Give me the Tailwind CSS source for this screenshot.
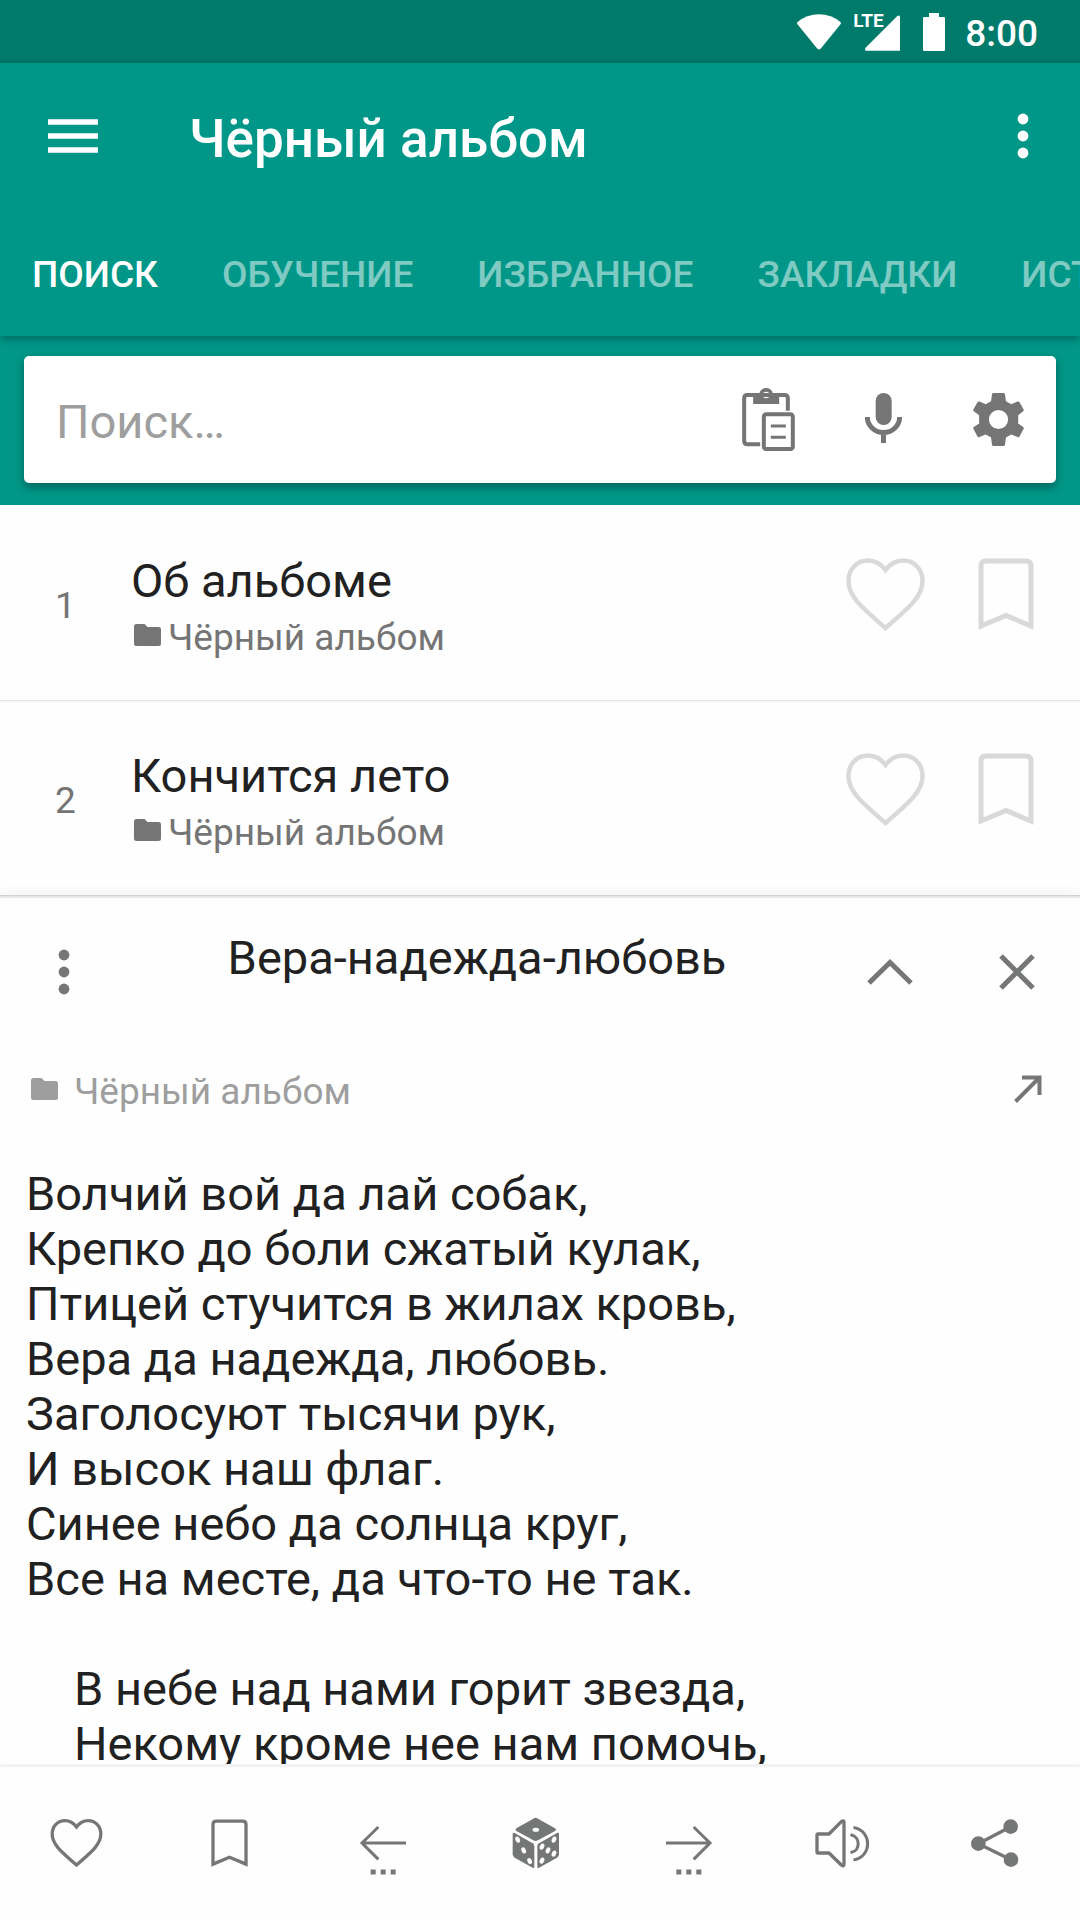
<!DOCTYPE html>
<html lang="ru">
<head>
    <meta charset="utf-8" />
    <meta name="viewport" content="width=device-width, initial-scale=1.0" />
    <title>Чёрный альбом</title>
    <script src="https://cdn.jsdelivr.net/npm/@tailwindcss/browser@4"></script>
</head>
<body class="h-screen flex flex-col overflow-hidden bg-[#fefefe] text-[#212121] font-['Roboto',sans-serif]">
    <svg class="hidden">
        <symbol id="heart" viewBox="0 0 79 73">
            <path fill="none" stroke="currentColor" d="M39.5 12C35 6 29 2.5 22 2.5C11 2.5 2.5 11 2.5 23C2.5 38 14 48 39.5 70C65 48 76.5 38 76.5 23C76.5 11 68 2.5 57 2.5C50 2.5 44 6 39.5 12Z" />
        </symbol>
        <symbol id="bookmark" viewBox="0 0 56 72">
            <path fill="none" stroke="currentColor" d="M3 68V8Q3 3 8 3H48Q53 3 53 8V68L28 57.5Z" />
        </symbol>
        <symbol id="folder" viewBox="0 0 27 22">
            <path fill="currentColor" d="M2.500 0H10.500L13.500 3H24.500Q27 3 27 5.500V19.500Q27 22 24.500 22H2.500Q0 22 0 19.500V2.500Q0 0 2.500 0Z" />
        </symbol>
        <symbol id="dots" viewBox="0 0 12 46">
            <g fill="currentColor"><circle cx="6" cy="6" r="5.400" /><circle cx="6" cy="23" r="5.400" /><circle cx="6" cy="40" r="5.400" /></g>
        </symbol>
    </svg>

    <div class="h-[63px] shrink-0 flex items-center justify-end pr-[42px] bg-[#007a6b] text-white">
        <svg class="w-11 h-9" viewBox="0 0 134 108" fill="currentColor"><path d="M1 24Q30 0 67 0Q104 0 133 24Q135 27 132 31L72 105Q67 110 62 105L2 31Q-1 27 1 24Z" /></svg>
        <div class="relative ml-6 w-[35px] h-9 translate-y-px">
            <svg class="w-full h-full" viewBox="0 0 105 106" fill="currentColor"><path d="M105 5V106H3Q-1 104 1 98L97 2Q103-2 105 5Z" /></svg>
            <span class="absolute -left-3 -top-[4px] text-[19px] leading-5 font-bold">LTE</span>
        </div>
        <svg class="ml-[23px] w-[22px] h-[38px]" viewBox="0 0 66 114" fill="currentColor"><path d="M18 0H48V12H62Q66 12 66 16V110Q66 114 62 114H4Q0 114 0 110V16Q0 12 4 12H18Z" /></svg>
        <span class="ml-[20px] pt-1 text-[37px] leading-[44px] font-medium">8:00</span>
    </div>

    <header class="relative z-10 shrink-0 bg-[#009788] text-white shadow-[0_3px_8px_rgba(0,0,0,0.3)]">
        <div class="h-[145px] flex items-center pl-12 pr-[51px]">
            <button type="button" aria-label="Меню">
                <svg class="w-[50px] h-[34px]" viewBox="0 0 50 34" stroke="currentColor" stroke-width="5.500"><path d="M0 3H50M0 17H50M0 31H50" /></svg>
            </button>
            <h1 class="flex-1 pt-1.5 pl-[91px] text-[53px] leading-[64px] font-medium">Чёрный альбом</h1>
            <button type="button" aria-label="Ещё">
                <svg class="w-3 h-[46px]"><use href="#dots" /></svg>
            </button>
        </div>
        <nav class="h-[128px] flex items-center gap-16 pt-1.5 pl-8 overflow-hidden whitespace-nowrap text-[37px] leading-[44px] font-medium text-white/50">
            <a href="#" class="text-white">ПОИСК</a>
            <a href="#">ОБУЧЕНИЕ</a>
            <a href="#">ИЗБРАННОЕ</a>
            <a href="#">ЗАКЛАДКИ</a>
            <a href="#">ИСТОРИЯ</a>
        </nav>
    </header>

    <div class="shrink-0 bg-[#009788] px-6 pt-5 pb-[22px]">
        <form class="h-[127px] flex items-center pl-8 pr-8 rounded-[5px] bg-white text-[#757575] shadow-[0_4px_10px_rgba(0,0,0,0.35)]">
            <input type="text" aria-label="Поиск" placeholder="Поиск…" class="flex-1 min-w-0 pt-1 text-[47px] leading-[56px] text-[#212121] placeholder:text-[#9e9e9e] outline-none" />
            <button type="button" aria-label="Вставить">
                <svg class="w-[53px] h-[63px]" viewBox="0 0 158 189" fill="none" stroke="currentColor">
                    <path stroke-width="12" d="M54 169H16Q6 169 6 159V31Q6 21 16 21H127Q137 21 137 31V68" />
                    <path fill="currentColor" fill-rule="evenodd" stroke="none" d="M33 15H52C55 5 63 0 72 0C81 0 89 5 92 15H111V48H33ZM72 11A10 10 0 1 0 72 31A10 10 0 1 0 72 11Z" />
                    <rect x="65" y="79" width="87" height="104" rx="7" stroke-width="12" />
                    <path stroke-width="9" d="M86 114H131M86 148H131" />
                </svg>
            </button>
            <button type="button" aria-label="Голосовой ввод" class="ml-[70px] pb-1">
                <svg class="w-[37px] h-[50px]" viewBox="0 0 111 150" fill="currentColor">
                    <rect x="32" width="48" height="96" rx="24" />
                    <path fill="none" stroke="currentColor" stroke-width="15" d="M7 72A48 46 0 0 0 104 72M55.500 118V150" />
                </svg>
            </button>
            <button type="button" aria-label="Настройки" class="ml-[71px]">
                <svg class="w-[51px] h-[53px]" viewBox="0 0 153 160" fill="currentColor"><path fill-rule="evenodd" d="M61 0H92Q95 0 96 3L99 25L115 34L134 26Q138 24 140 28L152 49Q154 53 151 55L136 67V92L151 103Q154 105 152 109L140 131Q138 135 134 133L115 125L99 134L96 157Q95 160 92 160H61Q58 160 57 157L54 134L38 125L19 133Q15 135 13 131L1 109Q-1 105 2 103L18 92V67L2 55Q-1 53 1 49L13 28Q15 24 19 26L38 34L54 25L57 3Q58 0 61 0ZM76.500 51A29 29 0 1 0 76.500 109A29 29 0 1 0 76.500 51Z" /></svg>
            </button>
        </form>
    </div>

    <ul class="shrink-0">
        <li class="h-[195px] flex items-start pr-[46px]">
            <span class="w-[131px] pt-[79px] text-center text-[37px] leading-[44px] text-[#757575]">1</span>
            <div class="flex-1 pt-12">
                <h2 class="text-[47px] leading-[56px]">Об альбоме</h2>
                <p class="mt-[7px] flex items-center gap-[7px] pl-[3px] text-[37px] leading-[44px] text-[#757575]">
                    <svg class="w-[27px] h-[22px] mb-1.5"><use href="#folder" /></svg>Чёрный альбом
                </p>
            </div>
            <button type="button" aria-label="В избранное" class="mt-[53px] text-[#d8dad9]"><svg class="w-[79px] h-[73px]" stroke-width="4.500"><use href="#heart" /></svg></button>
            <button type="button" aria-label="Закладка" class="mt-[53px] ml-[53px] text-[#d8dad9]"><svg class="w-14 h-[72px]" stroke-width="5"><use href="#bookmark" /></svg></button>
        </li>
        <li class="h-[195px] flex items-start pr-[46px] shadow-[inset_0_1px_0_#e4e4e4,inset_0_3px_0_#f7f7f7]">
            <span class="w-[131px] pt-[79px] text-center text-[37px] leading-[44px] text-[#757575]">2</span>
            <div class="flex-1 pt-12">
                <h2 class="text-[47px] leading-[56px]">Кончится лето</h2>
                <p class="mt-[7px] flex items-center gap-[7px] pl-[3px] text-[37px] leading-[44px] text-[#757575]">
                    <svg class="w-[27px] h-[22px] mb-1.5"><use href="#folder" /></svg>Чёрный альбом
                </p>
            </div>
            <button type="button" aria-label="В избранное" class="mt-[53px] text-[#d8dad9]"><svg class="w-[79px] h-[73px]" stroke-width="4.500"><use href="#heart" /></svg></button>
            <button type="button" aria-label="Закладка" class="mt-[53px] ml-[53px] text-[#d8dad9]"><svg class="w-14 h-[72px]" stroke-width="5"><use href="#bookmark" /></svg></button>
        </li>
    </ul>

    <main class="relative flex-1 min-h-0 flex flex-col bg-[#fefefe] pt-[3px] shadow-[inset_0_1px_0_#d0d3d2,inset_0_3px_0_#e8e8e8,0_-2px_12px_rgba(0,0,0,0.05)]">
        <div class="h-[147px] shrink-0 flex items-center text-[#757776]">
            <button type="button" aria-label="Действия" class="w-32 flex justify-center"><svg class="w-3 h-[46px]"><use href="#dots" /></svg></button>
            <h2 class="flex-1 self-start pt-8 text-center text-[47px] leading-[56px] text-[#212121]">Вера-надежда-любовь</h2>
            <button type="button" aria-label="Развернуть" class="w-[127px] flex justify-center">
                <svg class="w-[46px] h-[26px]" viewBox="0 0 46 26" fill="none" stroke="currentColor" stroke-width="5"><path d="M2 24L23 3.500L44 24" /></svg>
            </button>
            <button type="button" aria-label="Закрыть" class="w-[127px] flex justify-center">
                <svg class="w-9 h-9" viewBox="0 0 36 36" stroke="currentColor" stroke-width="5"><path d="M2 2L34 34M34 2L2 34" /></svg>
            </button>
        </div>
        <div class="h-[93px] shrink-0 flex items-center pl-[31px] pr-[38px] text-[37px] leading-[44px] text-[#9e9e9e]">
            <svg class="w-[27px] h-[22px] mb-1.5"><use href="#folder" /></svg>
            <span class="flex-1 pl-4">Чёрный альбом</span>
            <a href="#" aria-label="Открыть" class="mb-1.5 text-[#757776]">
                <svg class="w-7 h-7" viewBox="0 0 28 28" fill="none" stroke="currentColor" stroke-width="4"><path d="M8 2.500H25.500V20M25.500 2.500L1.500 26.500" /></svg>
            </a>
        </div>
        <article class="flex-1 min-h-0 overflow-hidden pt-7 pl-[26px] text-[47px] leading-[55px] whitespace-nowrap">
            <p>
                Волчий вой да лай собак,<br>
                Крепко до боли сжатый кулак,<br>
                Птицей стучится в жилах кровь,<br>
                Вера да надежда, любовь.<br>
                Заголосуют тысячи рук,<br>
                И высок наш флаг.<br>
                Синее небо да солнца круг,<br>
                Все на месте, да что-то не так.
            </p>
            <p class="mt-[55px] pl-12">
                В небе над нами горит звезда,<br>
                Некому кроме нее нам помочь,
            </p>
        </article>
    </main>

    <footer class="h-[156px] shrink-0 grid grid-cols-7 items-center justify-items-center border-t-[3px] border-[#f5f5f5] pr-2 pb-0.5 text-[#757776]">
        <button type="button" aria-label="В избранное"><svg class="w-[53px] h-12" stroke-width="5"><use href="#heart" /></svg></button>
        <button type="button" aria-label="Закладка"><svg class="w-[37px] h-12" stroke-width="5"><use href="#bookmark" /></svg></button>
        <button type="button" aria-label="Предыдущая">
            <svg class="w-14 h-14" viewBox="-15 -32 168 168" fill="none" stroke="currentColor" stroke-width="9" overflow="visible">
                <path d="M138 52H6M55 4L6 52L55 101" />
                <path stroke-width="15" d="M32 139H47M62 139H77M92 139H107" />
            </svg>
        </button>
        <button type="button" aria-label="Случайная">
            <svg class="w-14 h-14" viewBox="-13 -8 168 168" fill="currentColor">
                <path d="M63 3Q70-2 77 3L128 32Q134 36 128 40L77 68Q70 72 63 68L12 40Q7 36 12 32Z" />
                <path d="M1 47Q3 44 7 46L61 77Q66 80 66 86V148Q66 152 61 150L7 120Q1 116 1 110Z" />
                <path d="M140 47Q138 44 134 46L80 77Q75 80 75 86V148Q75 152 80 150L134 120Q140 116 140 110Z" />
                <g fill="#fefefe">
                    <ellipse cx="70.500" cy="36" rx="10" ry="6" />
                    <ellipse cx="16" cy="66" rx="6.500" ry="9.500" transform="rotate(-25 16 66)" />
                    <ellipse cx="34" cy="98" rx="6.500" ry="9.500" transform="rotate(-25 34 98)" />
                    <ellipse cx="52" cy="130" rx="6.500" ry="9.500" transform="rotate(-25 52 130)" />
                    <ellipse cx="125" cy="66" rx="6.500" ry="9.500" transform="rotate(25 125 66)" />
                    <ellipse cx="89" cy="87" rx="6.500" ry="9.500" transform="rotate(25 89 87)" />
                    <ellipse cx="107" cy="98" rx="6.500" ry="9.500" transform="rotate(25 107 98)" />
                    <ellipse cx="89" cy="129" rx="6.500" ry="9.500" transform="rotate(25 89 129)" />
                    <ellipse cx="125" cy="108" rx="6.500" ry="9.500" transform="rotate(25 125 108)" />
                </g>
            </svg>
        </button>
        <button type="button" aria-label="Следующая">
            <svg class="w-14 h-14" viewBox="-15 -32 168 168" fill="none" stroke="currentColor" stroke-width="9" overflow="visible">
                <path d="M0 52H132M83 4L132 52L83 101" />
                <path stroke-width="15" d="M31 139H46M61 139H76M91 139H106" />
            </svg>
        </button>
        <button type="button" aria-label="Озвучить">
            <svg class="w-14 h-14" viewBox="-3 -12 168 168" fill="none" stroke="currentColor" stroke-width="9" stroke-linecap="round" stroke-linejoin="round">
                <path stroke-width="10" d="M9 45H42L79 8Q87 2 87 10V136Q87 144 79 138L42 102H9Q6 102 6 99V48Q6 45 9 45Z" />
                <path d="M110 48C136 54 136 94 110 100M119 26C171 38 171 110 119 122" />
            </svg>
        </button>
        <button type="button" aria-label="Поделиться">
            <svg class="w-14 h-14" viewBox="-13 -13 168 168" fill="currentColor">
                <circle cx="21" cy="73" r="22" /><circle cx="118" cy="22" r="22" /><circle cx="119" cy="121" r="22" />
                <path fill="none" stroke="currentColor" stroke-width="10" d="M118 22L21 73L119 121" />
            </svg>
        </button>
    </footer>
</body>
</html>
